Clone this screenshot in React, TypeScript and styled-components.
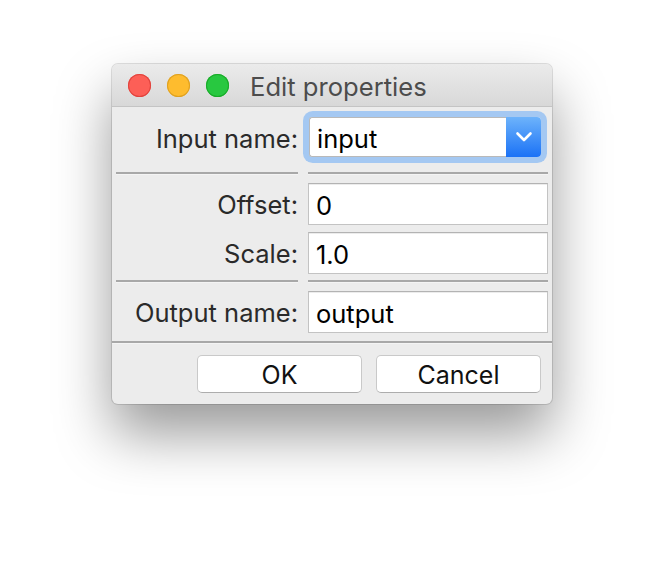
import React from "react";
import styled, { createGlobalStyle } from "styled-components";

const Global = createGlobalStyle`
  html, body { margin: 0; padding: 0; background: #ffffff; }
  body { width: 664px; height: 564px; overflow: hidden; font-family: Inter, "Liberation Sans", sans-serif; }
`;

const Stage = styled.div`
  width: 664px;
  height: 564px;
  padding: 64px 0 0 112px;
  box-sizing: border-box;
`;

const Window = styled.div`
  width: 440px;
  height: 340px;
  box-sizing: border-box;
  border-radius: 6px;
  background: #ececec;
  overflow: hidden;
  display: flex;
  flex-direction: column;
  box-shadow: 0 30px 56px rgba(0, 0, 0, 0.4), 0 0 0 1px rgba(0, 0, 0, 0.12);
`;

const TitleBar = styled.div`
  height: 42px;
  flex: none;
  display: flex;
  align-items: center;
  padding-left: 16px;
  gap: 16px;
  background: linear-gradient(#ebebeb, #d8d8d8);
  border-bottom: 1px solid #c4c4c4;
`;

const Light = styled.span<{ $color: string; $edge: string }>`
  width: 23px;
  height: 23px;
  border-radius: 50%;
  background: ${(p) => p.$color};
  box-shadow: inset 0 0 0 1px ${(p) => p.$edge};
  flex: none;
`;

const Title = styled.div`
  margin-left: 5px;
  padding-top: 2px;
  font-size: 25.6px;
  color: #4c4c4c;
`;

const Body = styled.div`
  display: grid;
  grid-template-columns: 182px 240px;
  column-gap: 10px;
  padding: 0 4px;
  align-items: center;
`;

const Label = styled.div<{ $shift?: number }>`
  text-align: right;
  font-size: 25.5px;
  line-height: 30px;
  color: #2a2a2a;
  padding-top: ${(p) => p.$shift ?? 1}px;
`;

const Line = styled.div<{ $full?: boolean }>`
  height: 2px;
  background: #a8a8a8;
  border-bottom: 1px solid #f4f4f4;
  ${(p) => (p.$full ? "grid-column: 1 / -1; margin: 0 -4px;" : "")}
`;

const Spacer = styled.div<{ $h: number }>`
  grid-column: 1 / -1;
  height: ${(p) => p.$h}px;
`;

const Combo = styled.div`
  margin: 0 7px 0 1px;
  height: 40px;
  display: flex;
  border-radius: 4px;
  background: #ffffff;
  box-shadow: 0 0 0 6px #a4c8f2;
`;

const ComboText = styled.div`
  flex: 1;
  display: flex;
  align-items: center;
  padding: 3px 0 0 7px;
  font-size: 25.5px;
  color: #000;
  border: 1px solid #b9b9b9;
  border-right: none;
  border-radius: 3px 0 0 3px;
`;

const ComboButton = styled.div`
  width: 35px;
  display: flex;
  align-items: center;
  justify-content: center;
  border-radius: 0 4px 4px 0;
  background: linear-gradient(#6db3fb, #1b72f6);
`;

const Field = styled.div`
  height: 42px;
  box-sizing: border-box;
  display: flex;
  align-items: center;
  padding: 2px 0 0 7px;
  background: #ffffff;
  border: 1px solid #c3c3c3;
  border-top-color: #b3b3b3;
  box-shadow: inset 0 1px 0 #ececec;
  font-size: 25.5px;
  color: #000;
`;

const ButtonRow = styled.div`
  grid-column: 1 / -1;
  display: flex;
  justify-content: flex-end;
  gap: 14px;
  margin-right: 7px;
`;

const Button = styled.div`
  width: 165px;
  height: 38px;
  box-sizing: border-box;
  display: flex;
  align-items: center;
  justify-content: center;
  padding-top: 1px;
  background: #ffffff;
  border: 1px solid #c9c9c9;
  border-bottom-color: #adadad;
  border-radius: 5px;
  font-size: 25px;
  color: #111;
`;

export default function App() {
  return (
    <Stage>
      <Global />
      <Window>
        <TitleBar>
          <Light $color="#fd5f57" $edge="#e0443e" />
          <Light $color="#febc2e" $edge="#dea123" />
          <Light $color="#28c840" $edge="#1aab29" />
          <Title>Edit properties</Title>
        </TitleBar>
        <Body>
          <Spacer $h={10} />
          <Label $shift={4}>Input name:</Label>
          <Combo>
            <ComboText>input</ComboText>
            <ComboButton>
              <svg width="18" height="12" viewBox="0 0 18 12">
                <path d="M2.5 2.5 L9 9 L15.5 2.5" fill="none" stroke="#fff" strokeWidth="2.6" strokeLinecap="round" strokeLinejoin="round" />
              </svg>
            </ComboButton>
          </Combo>
          <Spacer $h={15} />
          <Line />
          <Line />
          <Spacer $h={8} />
          <Label>Offset:</Label>
          <Field>0</Field>
          <Spacer $h={7} />
          <Label>Scale:</Label>
          <Field>1.0</Field>
          <Spacer $h={6} />
          <Line />
          <Line />
          <Spacer $h={8} />
          <Label>Output name:</Label>
          <Field>output</Field>
          <Spacer $h={8} />
          <Line $full />
          <Spacer $h={11} />
          <ButtonRow>
            <Button>OK</Button>
            <Button>Cancel</Button>
          </ButtonRow>
        </Body>
      </Window>
    </Stage>
  );
}
